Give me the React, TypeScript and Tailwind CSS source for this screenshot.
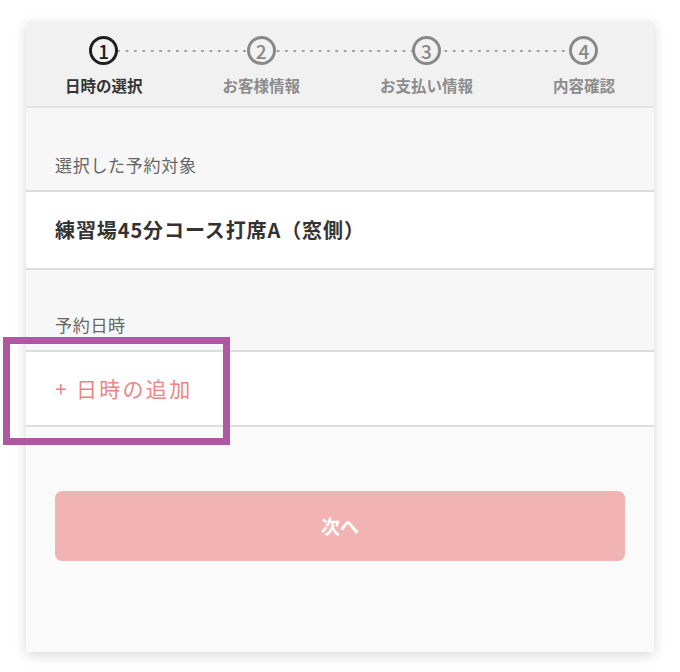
import React from "react";

const steps = [
  { n: "1", label: "日時の選択", active: true },
  { n: "2", label: "お客様情報", active: false },
  { n: "3", label: "お支払い情報", active: false },
  { n: "4", label: "内容確認", active: false },
];

export default function App() {
  return (
    <div
      className="relative w-[680px] h-[672px] bg-white pt-[22px] pl-[26px]"
      style={{ fontFamily: '"Noto Sans CJK JP", "Noto Sans", sans-serif' }}
    >
      <div className="w-[628px] h-[630px] bg-[#fafafa] shadow-[0_3px_12px_rgba(0,0,0,0.16)] flex flex-col">
        {/* Stepper */}
        <div className="relative bg-[#f1f1f1] border-b-2 border-[#e4e4e4] px-[39px] pt-[14px] pb-[11px]">
          <div className="absolute left-[80px] right-[70px] top-[27px] h-[4px] bg-[radial-gradient(circle,#9a9a9a_1px,transparent_1.4px)] bg-[length:8.4px_4px]" />
          <div className="relative flex justify-between">
            {steps.map((s) => (
              <div key={s.n} className="flex flex-col items-center">
                <div
                  className={
                    s.active
                      ? "w-[29px] h-[29px] rounded-full border-[3px] border-[#1e1e1e] bg-[#f1f1f1] flex items-center justify-center text-[19px] leading-none font-medium text-[#1e1e1e]"
                      : "w-[29px] h-[29px] rounded-full border-[3px] border-[#888888] bg-[#f1f1f1] flex items-center justify-center text-[19px] leading-none font-medium text-[#888888]"
                  }
                >
                  {s.n}
                </div>
                <div
                  className={
                    s.active
                      ? "mt-[10px] text-[15.5px] leading-[20px] font-bold text-[#333333] whitespace-nowrap"
                      : "mt-[10px] text-[15.5px] leading-[20px] font-bold text-[#8c8c8c] whitespace-nowrap"
                  }
                >
                  {s.label}
                </div>
              </div>
            ))}
          </div>
        </div>

        {/* Body */}
        <div className="bg-[#f7f7f7]">
          <div className="px-[29px] pt-[47px] pb-[15px] text-[17px] leading-[20px] tracking-[0.7px] text-[#666666]">
            選択した予約対象
          </div>
          <div className="bg-white border-y-2 border-[#dedede] h-[80px] px-[29px] flex items-center text-[20px] tracking-[0.9px] font-bold text-[#333333]">
            練習場45分コース打席A（窓側）
          </div>
          <div className="px-[29px] pt-[45px] pb-[15px] text-[17px] leading-[20px] tracking-[0.7px] text-[#666666]">
            予約日時
          </div>
          <div className="bg-white border-y-2 border-[#dedede] h-[77px] px-[29px] flex items-center text-[21px] tracking-[2.3px] text-[#ec8484]">
            + 日時の追加
          </div>
        </div>

        <div className="flex-1 bg-[#fafafa] px-[29px] pt-[64px]">
          <button className="w-full h-[70px] rounded-[7px] bg-[#f2b3b3] text-white text-[19px] font-bold flex items-center justify-center">
            次へ
          </button>
        </div>
      </div>

      {/* annotation highlight */}
      <div className="absolute left-[3px] top-[337px] w-[227px] h-[108px] border-[7px] border-[#b057a3]" />
    </div>
  );
}
